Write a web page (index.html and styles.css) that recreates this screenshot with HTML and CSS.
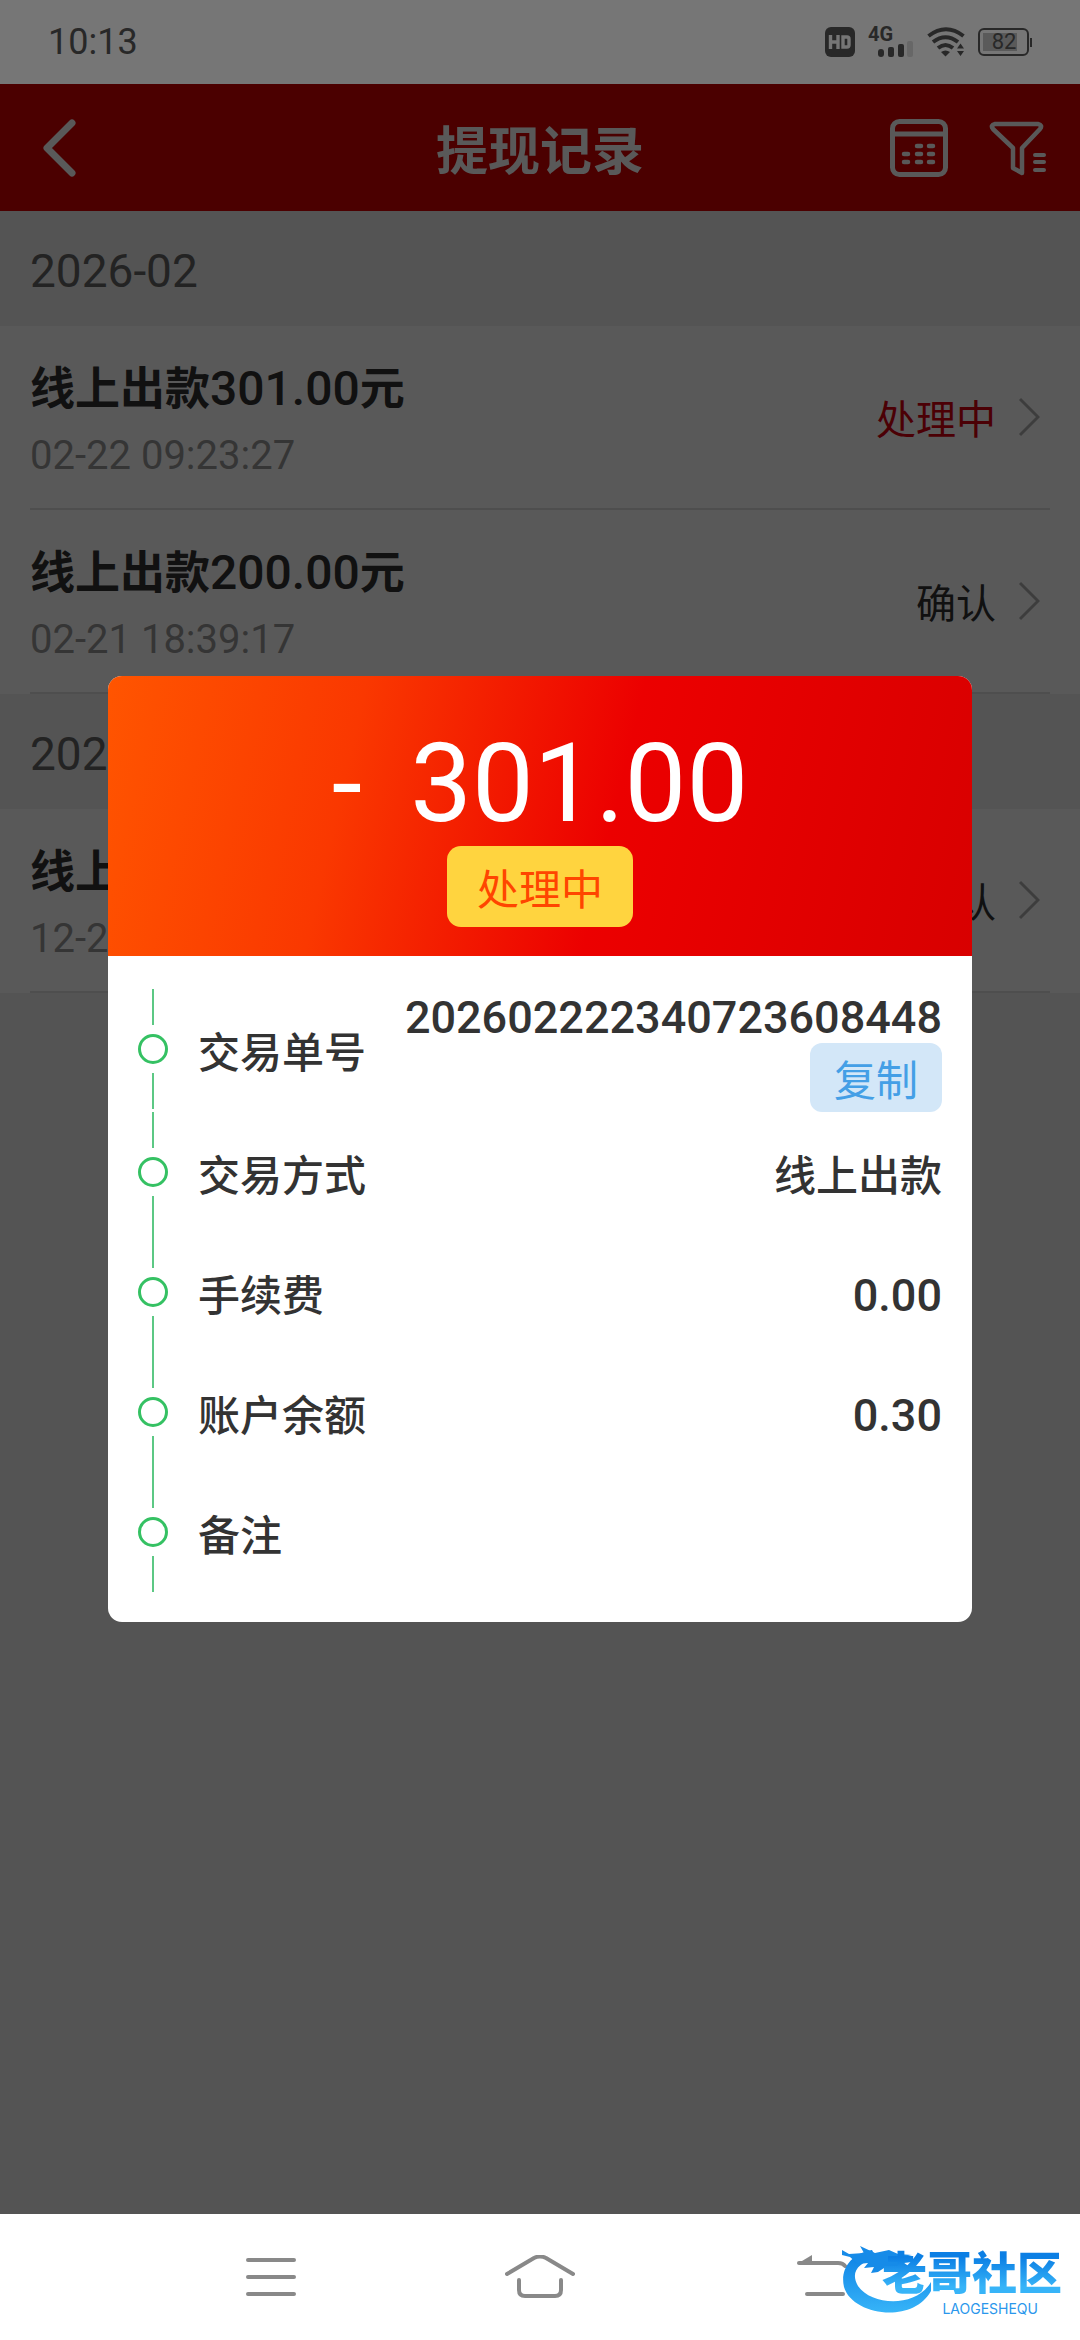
FILE: index.html
```html
<!DOCTYPE html>
<html lang="zh-CN">
<head>
<meta charset="utf-8">
<meta name="viewport" content="width=device-width, initial-scale=1">
<title>提现记录</title>
<link rel="stylesheet" href="styles.css">
</head>
<body>
<div class="screen">
  <div class="status-bar">
    <time class="clock">10:13</time>
    <div class="status-icons">
      <svg width="30" height="30" viewBox="0 0 30 30"><rect width="30" height="30" rx="6" fill="#282828"/><path d="M5.500 8v14M13 8v14M5.500 15h7.500M18 10v10h4q2 0 2-2v-6q0-2-2-2z" fill="none" stroke="#767676" stroke-width="3.400"/></svg>
      <span class="signal">
        <span class="network">4G</span>
        <svg width="36" height="16" viewBox="0 0 36 16"><g fill="#282828"><rect y="8" width="6" height="8" rx="3"/><rect x="10" y="6" width="6" height="10" rx="2"/><rect x="20" y="3" width="6" height="13" rx="2"/></g><rect x="29" width="6" height="16" rx="2" fill="#676767"/></svg>
      </span>
      <svg width="38" height="30" viewBox="0 0 38 30"><g fill="none" stroke="#282828" stroke-width="4"><path d="M1.500 9Q19-4.500 36.500 9"/><path d="M6 15Q18.500 5.500 31 15"/><path d="M11 21Q18.500 15 26 21"/></g><path d="M14 25q4.500-3 9 0l-4.500 4.500z" fill="#282828"/><path d="M30 21.500l3.500-5 3.500 5zM30 24h7l-3.500 5z" fill="#282828"/></svg>
      <span class="battery">
        <svg width="54" height="28" viewBox="0 0 54 28"><rect x="1" y="1" width="49" height="26" rx="5" fill="none" stroke="#282828" stroke-width="2"/><rect x="5" y="5" width="34" height="18" fill="#5a5a5a"/><path d="M53 10v9" stroke="#282828" stroke-width="2"/></svg>
        <span class="battery-level">82</span>
      </span>
    </div>
  </div>

  <div class="app">
    <header class="app-header">
      <button class="icon-button" aria-label="返回"><svg width="60" height="60" viewBox="0 0 60 60"><path d="M39 5L14 30 39 55" fill="none" stroke="#fff" stroke-width="7" stroke-linecap="round" stroke-linejoin="round"/></svg></button>
      <h1 class="app-title">提现记录</h1>
      <div class="header-actions">
        <button class="icon-button" aria-label="日历"><svg width="58" height="58" viewBox="0 0 58 58"><g fill="none" stroke="#fff" stroke-width="5"><rect x="2.500" y="2.500" width="53" height="53" rx="7"/><path d="M3 15h52"/></g><path d="M27 27h4M39 27h4M14 35h4M27 35h4M39 35h4M14 43h4M27 43h4M39 43h4" stroke="#fff" stroke-width="4.500" stroke-linecap="round"/></svg></button>
        <button class="icon-button" aria-label="筛选"><svg width="58" height="58" viewBox="0 0 58 58"><path d="M6 5h43q5 1 2 5L33 29v25l-9-5V29L4 10q-3-4 2-5z" fill="none" stroke="#fff" stroke-width="4.500" stroke-linejoin="round"/><path d="M46 36h9M46 43h9M46 51h9" stroke="#fff" stroke-width="4" stroke-linecap="round"/></svg></button>
      </div>
    </header>

    <main class="records">
      <h2 class="month">2026-02</h2>
      <ul class="record-list">
        <li><a class="record" href="#">
          <span class="record-info"><span class="record-title">线上出款<span class="figure">301.00</span>元</span><time class="record-time">02-22 09:23:27</time></span>
          <span class="record-status pending">处理中</span>
          <svg class="chevron" width="22" height="40" viewBox="0 0 22 40"><path d="M2 2l18 18L2 38" fill="none" stroke="#b0b0b0" stroke-width="3"/></svg>
        </a></li>
        <li><a class="record" href="#">
          <span class="record-info"><span class="record-title">线上出款<span class="figure">200.00</span>元</span><time class="record-time">02-21 18:39:17</time></span>
          <span class="record-status">确认</span>
          <svg class="chevron" width="22" height="40" viewBox="0 0 22 40"><path d="M2 2l18 18L2 38" fill="none" stroke="#b0b0b0" stroke-width="3"/></svg>
        </a></li>
      </ul>
      <h2 class="month">2025-12</h2>
      <ul class="record-list">
        <li><a class="record" href="#">
          <span class="record-info"><span class="record-title">线上出款</span><time class="record-time">12-2</time></span>
          <span class="record-status">确认</span>
          <svg class="chevron" width="22" height="40" viewBox="0 0 22 40"><path d="M2 2l18 18L2 38" fill="none" stroke="#b0b0b0" stroke-width="3"/></svg>
        </a></li>
      </ul>
    </main>
  </div>

  <div class="overlay">
    <section class="dialog" role="dialog" aria-label="交易详情">
      <div class="dialog-head">
        <p class="amount"><span>-</span><span>301.00</span></p>
        <span class="tag">处理中</span>
      </div>
      <dl class="details">
        <div class="detail">
          <span class="step"><i class="dot"></i></span>
          <dt>交易单号</dt>
          <dd><p><span class="figure">202602222340723608448</span></p><button class="copy">复制</button></dd>
        </div>
        <div class="detail">
          <span class="step"><i class="dot"></i></span>
          <dt>交易方式</dt>
          <dd><p>线上出款</p></dd>
        </div>
        <div class="detail">
          <span class="step"><i class="dot"></i></span>
          <dt>手续费</dt>
          <dd><p><span class="figure">0.00</span></p></dd>
        </div>
        <div class="detail">
          <span class="step"><i class="dot"></i></span>
          <dt>账户余额</dt>
          <dd><p><span class="figure">0.30</span></p></dd>
        </div>
        <div class="detail">
          <span class="step"><i class="dot"></i></span>
          <dt>备注</dt>
          <dd></dd>
        </div>
      </dl>
    </section>
  </div>

  <nav class="nav-bar">
    <button class="icon-button" aria-label="菜单"><svg width="70" height="44" viewBox="0 0 70 44"><path d="M12 5h46M12 22h46M12 39h46" stroke="#898989" stroke-width="4" stroke-linecap="round"/></svg></button>
    <button class="icon-button" aria-label="主页"><svg width="70" height="44" viewBox="0 0 70 44"><path d="M2 19L29 3q6-3 12 0l27 16M14 25v10q0 6 6 6h30q6 0 6-6V25" fill="none" stroke="#898989" stroke-width="4" stroke-linecap="round" stroke-linejoin="round"/></svg></button>
    <button class="icon-button" aria-label="返回"><svg width="76" height="44" viewBox="0 0 76 44"><path d="M28 8h39q5 0 7 3M36 39h36" fill="none" stroke="#898989" stroke-width="4" stroke-linecap="round"/><path d="M26 9L41 0v9z" fill="#898989"/></svg></button>
  </nav>

  <div class="watermark">
    <svg class="dragon" width="92" height="76" viewBox="0 0 92 76">
      <defs><linearGradient id="sea" x1="0" y1="0" x2="0" y2="1"><stop offset="0" stop-color="#0b7fe4"/><stop offset="1" stop-color="#37b4f8"/></linearGradient></defs>
      <path d="M30 8C8 12-2 28 2 45c8 28 68 38 87 4v-9C74 66 30 64 16 44c-8-14 0-23 18-28z" fill="url(#sea)"/>
      <path d="M0 8l7 4 15-1-4-7 15 7 14-3 9 4 14 1-8 2 8 5-8 1 6 4-12 0-7 4-7-3-6 4-7 1 3-6-10 1 4-5-10 1-8-7-12-3z" fill="#168be8"/>
    </svg>
    <div class="brand">
      <strong class="brand-name">老哥社区</strong>
      <span class="brand-latin">LAOGESHEQU</span>
    </div>
  </div>
</div>
</body>
</html>
```
FILE: styles.css
```css
* {
  box-sizing: border-box;
}

body,
h1,
h2,
p,
ul,
dl,
dd {
  margin: 0;
  padding: 0;
}

body {
  font-family: "Noto Sans CJK SC", sans-serif;
  font-size: 42px;
  color: #333;
}

ul {
  list-style: none;
}

svg {
  display: block;
}

button {
  border: 0;
  padding: 0;
  font: inherit;
}

.icon-button {
  background: none;
}

.status-bar,
.month,
.record-time,
.amount,
.figure {
  font-family: "Roboto", "Noto Sans CJK SC", sans-serif;
}

.figure {
  font-weight: 500;
  line-height: 1;
}

.screen {
  position: relative;
  display: grid;
  grid-template-rows: 84px 1fr 126px;
  min-height: 100vh;
}

/* System status bar */
.status-bar {
  display: flex;
  align-items: center;
  justify-content: space-between;
  padding: 0 48px;
  background: #767676;
  color: #282828;
}

.clock {
  font-size: 36px;
}

.status-icons {
  display: flex;
  align-items: center;
  gap: 13px;
}

.signal {
  display: flex;
  flex-direction: column;
  align-items: flex-end;
  width: 46px;
  height: 30px;
}

.network {
  align-self: flex-start;
  font-size: 20px;
  font-weight: 700;
  line-height: 14px;
}

.battery {
  position: relative;
}

.battery-level {
  position: absolute;
  top: 0;
  left: 0;
  width: 52px;
  font-size: 22px;
  line-height: 28px;
  text-align: center;
}

/* Page */
.app {
  grid-row: 2;
  grid-column: 1;
  background: #f0f0f0;
}

.app-header {
  display: grid;
  grid-template-columns: 1fr auto 1fr;
  align-items: center;
  height: 127px;
  padding: 0 33px;
  background: #d60000;
  color: #fff;
}

.app-title {
  font-size: 52px;
  font-weight: 700;
  line-height: 60px;
}

.app-header .icon-button {
  justify-self: start;
}

.header-actions {
  display: flex;
  justify-content: flex-end;
  gap: 41px;
}

.month {
  padding: 6px 30px 0;
  font-size: 46px;
  font-weight: 400;
  line-height: 109px;
  color: #666;
}

.record-list {
  padding: 0 30px;
  background: #fff;
}

.record {
  display: flex;
  align-items: center;
  height: 184px;
  border-bottom: 2px solid #dedede;
  color: #333;
  text-decoration: none;
}

.record-info {
  display: flex;
  flex: 1;
  flex-direction: column;
  gap: 12px;
  padding-top: 6px;
}

.record-title {
  font-size: 45px;
  font-weight: 700;
  line-height: 60px;
}

.record-title .figure {
  font-size: 48px;
}

.record-time {
  font-size: 40px;
  line-height: 56px;
  color: #999;
}

.record-status {
  font-size: 40px;
}

.pending {
  color: #d8000f;
}

.chevron {
  margin: 0 10px 0 22px;
}

/* Dialog */
.overlay {
  display: flex;
  grid-row: 2;
  grid-column: 1;
  align-items: center;
  justify-content: center;
  z-index: 1;
  background: rgba(0, 0, 0, 0.65);
}

.dialog {
  width: 80%;
  overflow: hidden;
  border-radius: 14px;
  background: #fff;
}

.dialog-head {
  display: flex;
  flex-direction: column;
  align-items: center;
  padding: 46px 30px 29px;
  background: linear-gradient(103deg, #ff5500 0%, #fa3800 28%, #ec0000 58%, #d80000 100%);
}

.amount {
  display: flex;
  gap: 48px;
  font-size: 110px;
  line-height: 124px;
  color: #fff;
}

.tag {
  padding: 0 30px;
  border-radius: 14px;
  background: #ffd43f;
  line-height: 81px;
  color: #ff4500;
}

.details {
  padding: 30px;
}

.detail {
  display: flex;
  align-items: center;
  gap: 30px;
  font-weight: 500;
}

.step {
  display: flex;
  flex-direction: column;
  align-items: center;
  gap: 9px;
}

.step::before,
.step::after {
  width: 2px;
  height: 36px;
  background: #5cc884;
  content: "";
}

.dot {
  width: 30px;
  height: 30px;
  border: 3px solid #35c163;
  border-radius: 50%;
}

.detail dd {
  display: flex;
  flex: 1;
  flex-direction: column;
  align-items: flex-end;
  line-height: 57px;
}

.detail .figure {
  font-size: 45px;
}

.copy {
  height: 69px;
  padding: 0 24px;
  border-radius: 12px;
  background: #d3e7f8;
  font-weight: 400;
  color: #449fe6;
}

/* System navigation */
.nav-bar {
  display: grid;
  grid-row: 3;
  grid-template-columns: repeat(3, 1fr);
  align-items: center;
  justify-items: center;
  padding: 0 136px;
  background: #fff;
}

.watermark {
  position: absolute;
  right: 18px;
  bottom: 22px;
  z-index: 2;
  display: flex;
}

.brand {
  display: flex;
  flex-direction: column;
  align-items: flex-end;
  gap: 8px;
  margin: 6px 0 0 -52px;
  color: #2a97ec;
}

.brand-name {
  background: linear-gradient(#0c7fe4 20%, #37b4f8 85%);
  background-clip: text;
  font-size: 45px;
  font-weight: 900;
  line-height: 46px;
  color: transparent;
}

.brand-latin {
  padding-right: 24px;
  font-family: "Inter", sans-serif;
  font-size: 14px;
  line-height: 14px;
}
```
